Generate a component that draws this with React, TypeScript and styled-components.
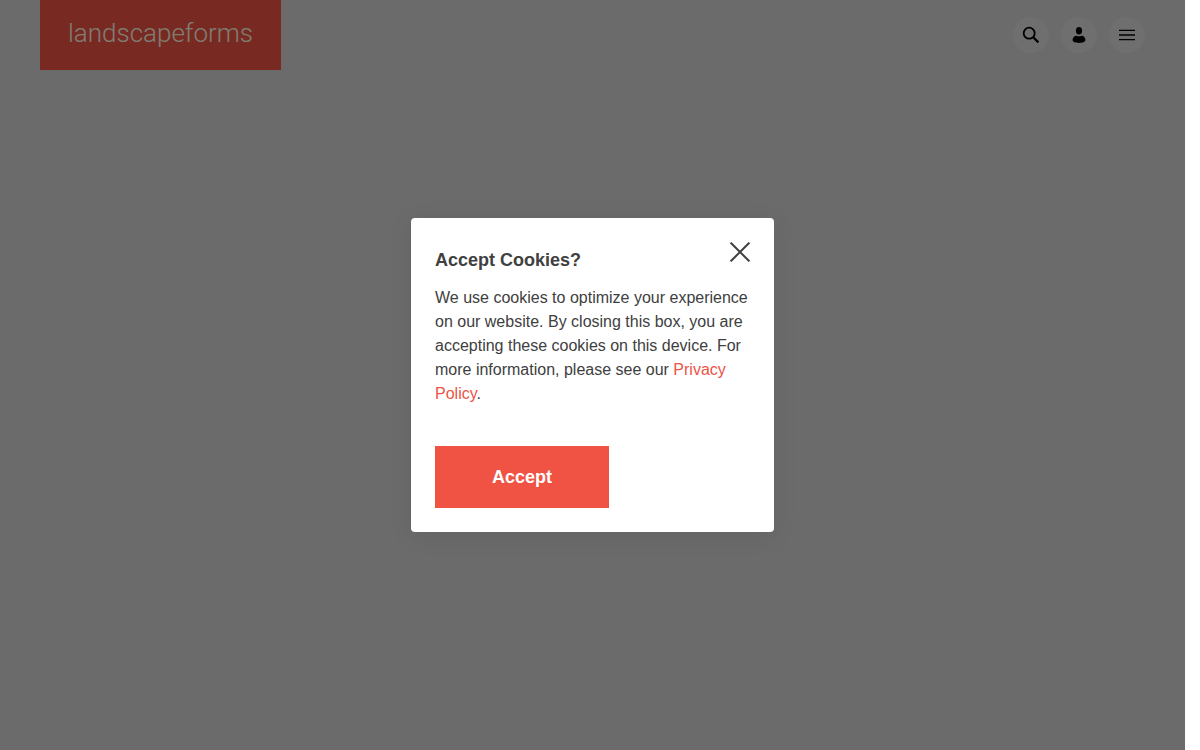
import React from "react";
import styled, { createGlobalStyle } from "styled-components";

const GlobalStyle = createGlobalStyle`
  *, *::before, *::after { box-sizing: border-box; }
  body {
    margin: 0;
    background: #fff;
    color: #404040;
    font-family: "Liberation Sans", Arial, sans-serif;
    font-size: 16px;
    line-height: 24px;
  }
`;

const Page = styled.div`
  position: relative;
  margin-right: 15px;
  min-height: 100vh;
  background: #d8d7d6;
`;

const Header = styled.header`
  display: flex;
  justify-content: space-between;
  align-items: flex-start;
  padding: 0 40px;
`;

const Logo = styled.a`
  display: block;
  min-width: 241px;
  padding: 13px 24px 17px;
  background: #f05243;
  color: #fffae4;
  font-family: Roboto, "Open Sans", sans-serif;
  font-weight: 300;
  font-size: 26px;
  line-height: 40px;
  text-align: center;
  text-decoration: none;
`;

const Actions = styled.nav`
  display: flex;
  gap: 12px;
  padding-top: 17px;
`;

const IconButton = styled.button`
  display: flex;
  align-items: center;
  justify-content: center;
  width: 36px;
  height: 36px;
  padding: 0;
  border: 0;
  border-radius: 50%;
  background: #dedede;
  color: #000;
`;

const Backdrop = styled.div`
  position: absolute;
  inset: 0;
  display: flex;
  align-items: center;
  justify-content: center;
  background: rgba(0, 0, 0, 0.5);
`;

const Dialog = styled.section`
  width: 363px;
  max-width: 100%;
  padding: 24px;
  border-radius: 4px;
  background: #fff;
  box-shadow: 0 4px 24px rgba(0, 0, 0, 0.08);
`;

const DialogHeader = styled.div`
  display: flex;
  justify-content: space-between;
  align-items: flex-start;
`;

const Title = styled.h2`
  margin: 0;
  font-size: 18px;
  line-height: 36px;
`;

const CloseButton = styled.button`
  display: flex;
  padding: 0;
  border: 0;
  background: none;
  color: #404040;
`;

const Message = styled.p`
  margin: 8px 0 40px;
`;

const PolicyLink = styled.a`
  color: #ec5446;
  text-decoration: none;
`;

const AcceptButton = styled.button`
  display: block;
  min-width: 174px;
  padding: 19px 24px;
  border: 0;
  background: #f05243;
  color: #fff;
  font: bold 18px/24px "Liberation Sans", Arial, sans-serif;
`;

export default function App() {
  return (
    <>
      <GlobalStyle />
      <Page>
        <Header>
          <Logo href="#">landscapeforms</Logo>
          <Actions aria-label="Site">
            <IconButton aria-label="Search">
              <svg width="18" height="18" viewBox="0 0 18 18" fill="none" stroke="currentColor">
                <circle cx="7.2" cy="7.2" r="5.5" strokeWidth="1.8" />
                <path d="M11.2 11.2 16.4 16.4" strokeWidth="2.2" />
              </svg>
            </IconButton>
            <IconButton aria-label="Account">
              <svg width="18" height="18" viewBox="0 0 18 18" fill="currentColor">
                <ellipse cx="9" cy="4.8" rx="3.1" ry="3.8" />
                <path d="M2.6 14C2.6 11.2 4.6 9.9 6.2 9.7 8 10.5 10 10.5 11.8 9.7 13.4 9.9 15.4 11.2 15.4 14 15.4 15.9 12.4 16.9 9 16.9S2.6 15.9 2.6 14Z" />
              </svg>
            </IconButton>
            <IconButton aria-label="Menu">
              <svg width="18" height="18" viewBox="0 0 18 18" fill="none" stroke="currentColor">
                <path d="M1 4.4H17M1 13.6H17" strokeWidth="1.3" />
                <path d="M1 9H17" strokeWidth="1.5" />
              </svg>
            </IconButton>
          </Actions>
        </Header>
        <Backdrop>
          <Dialog role="dialog" aria-modal="true" aria-labelledby="cookie-title">
            <DialogHeader>
              <Title id="cookie-title">Accept Cookies?</Title>
              <CloseButton aria-label="Close">
                <svg width="20" height="20" viewBox="0 0 20 20" fill="none" stroke="currentColor" strokeWidth="2">
                  <path d="M.6.6 19.4 19.4M19.4.6.6 19.4" />
                </svg>
              </CloseButton>
            </DialogHeader>
            <Message>
              We use cookies to optimize your experience on our website. By closing this box, you are
              accepting these cookies on this device. For more information, please see our{" "}
              <PolicyLink href="#">Privacy Policy</PolicyLink>.
            </Message>
            <AcceptButton>Accept</AcceptButton>
          </Dialog>
        </Backdrop>
      </Page>
    </>
  );
}
